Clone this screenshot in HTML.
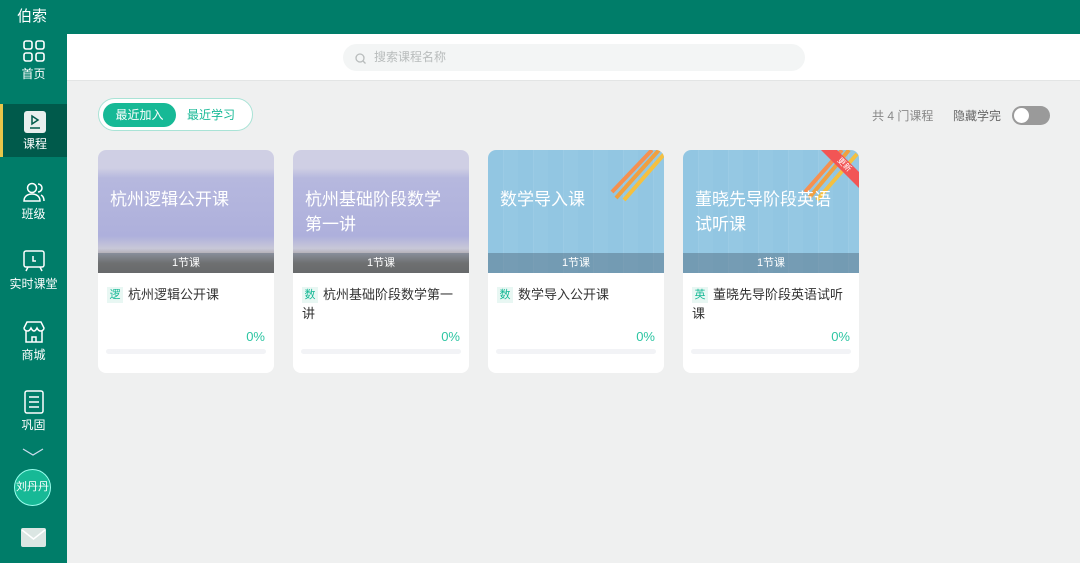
<!DOCTYPE html>
<html><head><meta charset="utf-8"><style>
*{margin:0;padding:0;box-sizing:border-box}
body{width:1080px;height:563px;overflow:hidden;background:#eff0f0;font-family:"Liberation Sans","Noto Sans CJK SC",sans-serif;position:relative}
.hdr{position:absolute;left:0;top:0;width:1080px;height:34px;background:#007d69;color:#fff;font-size:15px;line-height:34px;padding-left:17px}
.side{position:absolute;left:0;top:34px;width:67px;height:529px;background:#007d69}
.nav{position:absolute;left:0;width:67px;text-align:center;color:#fff;font-size:12px}
.nav svg{display:block;margin:0 auto 2px}
.sel{background:#005a4b;border-left:3px solid #e8c64a}
.top{position:absolute;left:67px;top:34px;width:1013px;height:47px;background:#fff;border-bottom:1px solid #e3e5e5}
.search{position:absolute;left:276px;top:10px;width:462px;height:27px;border-radius:14px;background:#f3f5f5;color:#b8bcbc;font-size:12px;line-height:27px;padding-left:31px}
.tabs{position:absolute;left:98px;top:98px;width:155px;height:33px;border:1px solid #a9e3d6;border-radius:17px;background:#fff}
.tab1{position:absolute;left:4px;top:4px;width:73px;height:24px;border-radius:12px;background:#17b996;color:#fff;font-size:12px;line-height:24px;text-align:center}
.tab2{position:absolute;left:88px;top:4px;font-size:12px;line-height:24px;color:#17b996}
.card{position:absolute;top:150px;width:176px;height:223px;background:#fff;border-radius:8px;overflow:hidden}
.img{height:123px;position:relative;overflow:hidden}
.p{background:linear-gradient(#cfcfe4 0,#cfcfe4 18px,#b6b8de 28px,#aeb0dc 70%,#c8c8d8 80%,#8a7f74 92%,#7d7469)}
.b{background:repeating-linear-gradient(90deg,#92c6e2 0 15px,#9bcbe5 15px 16px,#95c8e3 16px 30px)}
.tt{position:absolute;left:12px;top:37px;right:20px;color:#fff;font-size:17px;line-height:25px}
.cnt{position:absolute;left:0;bottom:0;width:100%;height:20px;background:rgba(70,90,110,.4);color:#fff;font-size:11px;line-height:20px;text-align:center}
.nm{padding:12px 8px 0 9px;font-size:13px;color:#333;line-height:19px;height:56px}
.tg{display:inline-block;width:16px;height:16px;background:#e8f7f3;color:#17b996;font-size:11px;line-height:16px;text-align:center;margin-right:5px;vertical-align:1px}
.pc{text-align:right;padding-right:9px;color:#2cc5a2;font-size:13px}
.bar{margin:5px 8px 0 8px;height:5px;border-radius:3px;background:#f2f3f6}
</style></head><body>
<div class="hdr">伯索</div>
<div class="side">
 <div class="nav" style="top:5px"><svg width="24" height="24" viewBox="0 0 24 24" fill="none" stroke="#fff" stroke-width="1.6"><rect x="2" y="2" width="8" height="8" rx="2"/><rect x="14" y="2" width="8" height="8" rx="2"/><rect x="2" y="14" width="8" height="8" rx="2"/><rect x="14" y="14" width="8" height="8" rx="2"/></svg>首页</div>
 <div class="nav sel" style="top:70px;height:53px;padding-top:7px"><svg width="22" height="22" viewBox="0 0 22 22"><rect x="0" y="0" width="22" height="22" rx="3" fill="#e8efed"/><path d="M8 5l6 4-6 4z" fill="none" stroke="#005a4b" stroke-width="1.5"/><path d="M6 17h10" stroke="#005a4b" stroke-width="1.5"/></svg>课程</div>
 <div class="nav" style="top:147px"><svg width="24" height="22" viewBox="0 0 24 22" fill="none" stroke="#fff" stroke-width="1.5"><circle cx="10" cy="7" r="4.5"/><path d="M2 20c0-5 4-7 8-7s8 2 8 7z"/><path d="M16 3a4 4 0 010 8M19 14c2 1 3 3 3 6"/></svg>班级</div>
 <div class="nav" style="top:215px"><svg width="24" height="24" viewBox="0 0 24 24" fill="none" stroke="#fff" stroke-width="1.5"><rect x="2" y="2" width="20" height="16" rx="2"/><path d="M11 7v5h3M6 18l-2 4M18 18l2 4"/></svg>实时课堂</div>
 <div class="nav" style="top:286px"><svg width="24" height="24" viewBox="0 0 24 24" fill="none" stroke="#fff" stroke-width="1.5"><path d="M5 2h14l3 6c0 2-2 3-3.5 3S16 10 15 8c-1 2-2 3-3 3s-2-1-3-3c-1 2-2 3-3.5 3S2 10 2 8z"/><path d="M4 11v11h16V11M10 22v-5h4v5"/></svg>商城</div>
 <div class="nav" style="top:356px"><svg width="22" height="24" viewBox="0 0 22 24" fill="none" stroke="#fff" stroke-width="1.5"><rect x="2" y="1" width="18" height="22" rx="2"/><path d="M6 7h10M6 12h10M6 17h10"/></svg>巩固</div>
 <svg style="position:absolute;left:22px;top:413px" width="22" height="10" viewBox="0 0 22 10" fill="none" stroke="#cde" stroke-width="1.2"><path d="M1 2l10 6 10-6"/></svg>
 <div style="position:absolute;left:14px;top:435px;width:37px;height:37px;border-radius:50%;background:#17b996;border:1px solid #9fe;color:#fff;font-size:11px;line-height:35px;text-align:center">刘丹丹</div>
 <div style="position:absolute;left:21px;top:494px;width:25px;height:19px;background:#dbe6e3;border-radius:2px"><svg width="25" height="19"><path d="M1 2l11.5 9L24 2" fill="none" stroke="#fff" stroke-width="1.5"/></svg></div>
</div>
<div class="top"><div class="search"><svg style="position:absolute;left:12px;top:9px" width="11" height="11" fill="none" stroke="#b8bcbc" stroke-width="1.3"><circle cx="5" cy="5" r="4"/><path d="M8 8l2.5 2.5"/></svg>搜索课程名称</div></div>
<div class="tabs"><div class="tab1">最近加入</div><div class="tab2">最近学习</div></div>
<div style="position:absolute;left:872px;top:107px;font-size:12px;color:#888">共 4 门课程</div>
<div style="position:absolute;left:953px;top:107px;font-size:12px;color:#666">隐藏学完</div>
<div style="position:absolute;left:1012px;top:106px;width:38px;height:19px;border-radius:10px;background:#9a9a9a"><div style="position:absolute;left:2px;top:2px;width:15px;height:15px;border-radius:50%;background:#fff"></div></div>

<div class="card" style="left:98px"><div class="img p"><div class="tt">杭州逻辑公开课</div><div class="cnt">1节课</div></div><div class="nm"><span class="tg">逻</span>杭州逻辑公开课</div><div class="pc">0%</div><div class="bar"></div></div>
<div class="card" style="left:293px"><div class="img p"><div class="tt">杭州基础阶段数学第一讲</div><div class="cnt">1节课</div></div><div class="nm"><span class="tg">数</span>杭州基础阶段数学第一讲</div><div class="pc">0%</div><div class="bar"></div></div>
<div class="card" style="left:488px"><div class="img b"><svg style="position:absolute;right:0;top:0" width="60" height="55"><g stroke-width="4"><path d="M55 0L12 48" stroke="#f0a040"/><path d="M62 2L20 50" stroke="#f5c040"/><path d="M48 0L8 42" stroke="#f59050"/></g></svg><div class="tt">数学导入课</div><div class="cnt">1节课</div></div><div class="nm"><span class="tg">数</span>数学导入公开课</div><div class="pc">0%</div><div class="bar"></div></div>
<div class="card" style="left:683px"><div class="img b"><svg style="position:absolute;right:0;top:0" width="60" height="55"><g stroke-width="4"><path d="M50 0L10 48" stroke="#f0a040"/><path d="M58 4L18 50" stroke="#f5c040"/><path d="M43 0L6 42" stroke="#f59050"/></g><path d="M22 0h16l22 22v16z" fill="#f25555"/><text x47="0" x="45" y="17" font-size="8" fill="#fff" transform="rotate(45 45 15)" text-anchor="middle">更新</text></svg><div class="tt">董晓先导阶段英语试听课</div><div class="cnt">1节课</div></div><div class="nm"><span class="tg">英</span>董晓先导阶段英语试听课</div><div class="pc">0%</div><div class="bar"></div></div>
</body></html>
